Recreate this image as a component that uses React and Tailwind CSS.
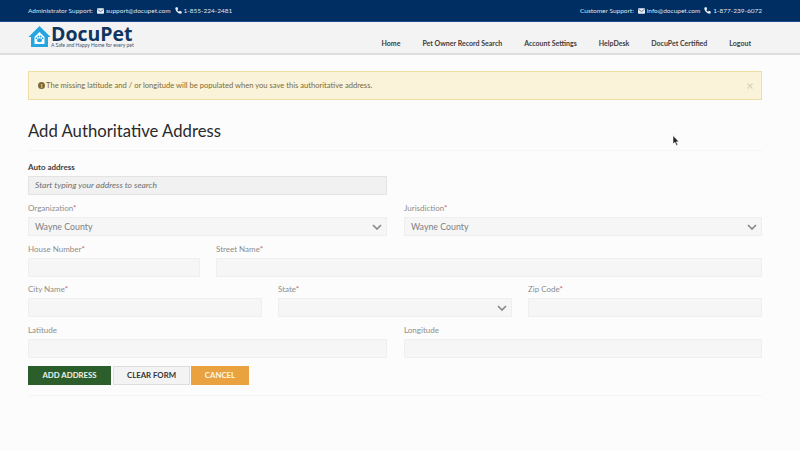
import React from "react";

const Mail = () => (
  <svg width="7" height="6" viewBox="0 0 14 11" className="shrink-0">
    <rect width="14" height="11" rx="1.5" fill="#e8eef5" />
    <path d="M1 2.5 L7 6.5 L13 2.5" fill="none" stroke="#002d62" strokeWidth="1.2" />
  </svg>
);
const Phone = () => (
  <svg width="7" height="7" viewBox="0 0 24 24" className="shrink-0">
    <path d="M5 1 L9 1 L11 8 L8 10 C9 13 11 15 14 16 L16 13 L23 15 L23 20 C23 22 21 23 19 23 C10 22 2 14 1 5 C1 3 3 1 5 1 Z" fill="#e8eef5" />
  </svg>
);
const Chevron = () => (
  <svg width="10" height="6" viewBox="0 0 10 6" className="shrink-0">
    <path d="M1 1 L5 5 L9 1" fill="none" stroke="#8a8a8a" strokeWidth="1.7" />
  </svg>
);
const Logo = () => (
  <svg width="23" height="22" viewBox="0 0 22 22" className="shrink-0">
    <path d="M0 11 L11 0 L22 11 L19.5 11 L19.5 21 L2.5 21 L2.5 11 Z" fill="#26a6e0" />
    <path d="M6 18 L6 11 L11 6 L16 11 L16 18 Z" fill="#fff" />
    <ellipse cx="11" cy="14.3" rx="2.5" ry="2" fill="#26a6e0" />
    <circle cx="7.9" cy="12.2" r="0.9" fill="#26a6e0" />
    <circle cx="9.9" cy="10.5" r="0.9" fill="#26a6e0" />
    <circle cx="12.1" cy="10.5" r="0.9" fill="#26a6e0" />
    <circle cx="14.1" cy="12.2" r="0.9" fill="#26a6e0" />
  </svg>
);

function Label({ children, req, dark }) {
  return (
    <div className={`text-[8px] leading-[10px] h-[10px] mb-[4px] ${dark ? "text-[#3e3e3e] font-bold" : "text-[#8d8d8d]"}`}>
      {children}
      {req && <span className="text-[#c9656b]">*</span>}
    </div>
  );
}

function Field({ label, req, value, select, className = "" }) {
  return (
    <div className={className}>
      <Label req={req}>{label}</Label>
      <div className="h-[19px] bg-[#f6f6f6] border border-[#efefef] flex items-center justify-between pl-[6px] pr-[4px] text-[8.8px] text-[#808080]">
        <span>{value}</span>
        {select && <Chevron />}
      </div>
    </div>
  );
}

export default function App() {
  return (
    <div className="relative w-[800px] h-[450px] overflow-hidden bg-[#fcfcfc] flex flex-col" style={{ fontFamily: "Lato, 'Open Sans', sans-serif" }}>
      <div className="h-[22px] bg-[#002d62] border-b border-[#1c4a88] pl-[28px] pr-[38px] flex items-center justify-between text-[6.5px] text-[#dfe6ef]">
        <div className="flex items-center">
          <span>Administrator Support:</span>
          <span className="ml-[4px] mr-[2px]"><Mail /></span>
          <span>support@docupet.com</span>
          <span className="ml-[4px] mr-[2px]"><Phone /></span>
          <span>1-855-224-2481</span>
        </div>
        <div className="flex items-center">
          <span>Customer Support:</span>
          <span className="ml-[4px] mr-[2px]"><Mail /></span>
          <span>info@docupet.com</span>
          <span className="ml-[4px] mr-[2px]"><Phone /></span>
          <span>1-877-239-6072</span>
        </div>
      </div>

      <div className="h-[33px] bg-[#f3f3f4] border-b-2 border-[#dedede] pl-[28px] pr-[49px] flex items-center justify-between">
        <div className="flex items-center gap-[0px] -mt-[2px]">
          <Logo />
          <div className="flex flex-col h-[22px]">
            <span className="text-[#0f3560] text-[19.5px] leading-[16px] h-[16px] font-bold" style={{ fontFamily: "'Open Sans', sans-serif" }}>DocuPet</span>
            <span className="text-[#3a5472] text-[5px] leading-[6px] h-[6px]">A Safe and Happy Home for every pet</span>
          </div>
        </div>
        <nav className="flex items-center gap-[22px] text-[7px] font-bold text-[#3d3d3d] pt-[11px]">
          <span>Home</span>
          <span>Pet Owner Record Search</span>
          <span>Account Settings</span>
          <span>HelpDesk</span>
          <span>DocuPet Certified</span>
          <span>Logout</span>
        </nav>
      </div>

      <div className="pl-[28px] pr-[38px] flex-1 flex flex-col">
        <div className="mt-[16px] h-[29px] bg-[#faf3da] border border-[#eedfa4] pl-[9px] pr-[8px] flex items-center justify-between text-[7.6px] text-[#7c6a35]">
          <div className="flex items-center gap-[1px]">
            <span className="w-[7px] h-[7px] rounded-full bg-[#7c6a35] text-[#faf3da] text-[6px] font-bold flex items-center justify-center">!</span>
            <span>The missing latitude and / or longitude will be populated when you save this authoritative address.</span>
          </div>
          <svg width="6" height="6" viewBox="0 0 6 6"><path d="M0.5 0.5 L5.5 5.5 M5.5 0.5 L0.5 5.5" stroke="#d9d3bd" strokeWidth="1.2" /></svg>
        </div>

        <h1 className="mt-[21px] text-[16.7px] leading-[20px] text-[#2a2a2a] font-normal h-[20px]">Add Authoritative Address</h1>
        <div className="mt-[9px] border-t border-[#f5f5f5]" />

        <div className="mt-[11px]">
          <Label dark>Auto address</Label>
          <div className="w-[359px] h-[19px] bg-[#f1f1f1] border border-[#e3e3e3] flex items-center pl-[6px] text-[8.5px] italic text-[#707070]">
            Start typing your address to search
          </div>
        </div>

        <div className="mt-[8px] flex gap-[17px]">
          <Field className="w-[359px]" label="Organization" req value="Wayne County" select />
          <Field className="w-[358px]" label="Jurisdiction" req value="Wayne County" select />
        </div>
        <div className="mt-[8px] flex gap-[16px]">
          <Field className="w-[172px]" label="House Number" req />
          <Field className="w-[546px]" label="Street Name" req />
        </div>
        <div className="mt-[7px] flex gap-[16px]">
          <Field className="w-[234px]" label="City Name" req />
          <Field className="w-[234px]" label="State" req select />
          <Field className="w-[234px]" label="Zip Code" req />
        </div>
        <div className="mt-[8px] flex gap-[17px]">
          <Field className="w-[359px]" label="Latitude" />
          <Field className="w-[358px]" label="Longitude" />
        </div>

        <div className="mt-[8px] flex text-[7.8px] font-bold">
          <div className="w-[83px] h-[19px] bg-[#2b5e2b] text-[#f0f3ef] flex items-center justify-center">ADD ADDRESS</div>
          <div className="ml-[2px] w-[77px] h-[19px] bg-[#f3f3f3] border border-[#dedede] text-[#333] flex items-center justify-center">CLEAR FORM</div>
          <div className="ml-[1px] w-[58px] h-[19px] bg-[#e9a23f] text-[#fdf6e8] flex items-center justify-center">CANCEL</div>
        </div>
        <div className="mt-[10px] border-t border-[#f5f5f5]" />
      </div>

      <svg width="8" height="12" viewBox="0 0 8 12" className="absolute left-[672px] top-[135px]">
        <path d="M1 0.5 L1 9 L3 7.2 L4.4 10.5 L5.8 9.9 L4.4 6.8 L7 6.8 Z" fill="#222" stroke="#fff" strokeWidth="0.6" />
      </svg>
    </div>
  );
}
